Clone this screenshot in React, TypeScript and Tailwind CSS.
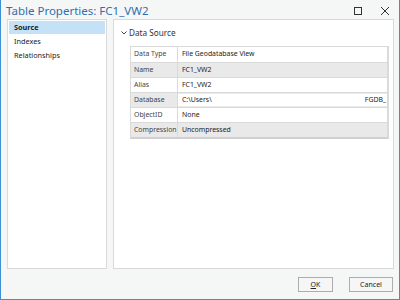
import React from "react";

const rows: { label: string; value: string; gray: boolean; input?: boolean }[] = [
  { label: "Data Type", value: "File Geodatabase View", gray: false },
  { label: "Name", value: "FC1_VW2", gray: true },
  { label: "Alias", value: "FC1_VW2", gray: false },
  { label: "Database", value: "C:\\Users\\", gray: true, input: true },
  { label: "ObjectID", value: "None", gray: false },
  { label: "Compression", value: "Uncompressed", gray: true },
];

export default function App() {
  return (
    <div
      className="w-[400px] h-[300px] bg-[#f5f6f6] border-l border-r border-b border-[#3d8fd6] flex flex-col text-[#222]"
      style={{ fontFamily: '"Noto Sans", "Open Sans", sans-serif' }}
    >
      {/* title bar */}
      <div className="h-[19px] flex items-center pl-[5px] pr-[6px] shrink-0">
        <div className="text-[11.5px] text-[#2f6fb0] leading-none flex-1 pt-[3px]">Table Properties: FC1_VW2</div>
        <svg width="10" height="10" viewBox="0 0 10 10" className="mr-[17px] mt-[3px]">
          <rect x="1.5" y="1.5" width="7" height="7" fill="none" stroke="#333" strokeWidth="1" />
        </svg>
        <svg width="10" height="10" viewBox="0 0 10 10" className="mr-[3px] mt-[3px]">
          <path d="M1 1 L9 9 M9 1 L1 9" stroke="#333" strokeWidth="1" />
        </svg>
      </div>
      {/* body */}
      <div className="flex gap-[6px] pl-[6px] pr-[5px] h-[250px] shrink-0">
        <div className="w-[100px] bg-white border border-[#d9d9d9] pt-px px-px">
          <div className="h-[13px] bg-[#c4e1f8] flex items-center pl-[5px] text-[7.3px] font-bold leading-none">Source</div>
          <div className="h-[15px] flex items-center pl-[5px] text-[7.3px] leading-none">Indexes</div>
          <div className="h-[13px] flex items-center pl-[5px] text-[7.3px] leading-none">Relationships</div>
        </div>
        <div className="flex-1 bg-white border border-[#d9d9d9] pl-[6px] pr-[4px]">
          <div className="flex items-center h-[25px] pt-[1px]">
            <svg width="6" height="6" viewBox="0 0 6 6" className="ml-[1px] mr-[2px]">
              <path d="M0.5 1.5 L3 4 L5.5 1.5" fill="none" stroke="#444" strokeWidth="1" />
            </svg>
            <span className="text-[8.2px] text-[#333]">Data Source</span>
          </div>
          <div className="ml-[10px] mt-[1px] border border-[#dadada] border-b-2 border-r-2 border-b-[#d0d0d0]">
            {rows.map((r, i) => (
              <div
                key={r.label}
                className={`flex h-[15px] text-[6.9px] ${r.gray ? "bg-[#e9e9e9]" : "bg-white"} ${i > 0 ? "border-t border-[#dadada]" : ""}`}
              >
                <div className="w-[47px] border-r border-[#dadada] flex items-center pl-[3px] text-[#444] whitespace-nowrap">{r.label}</div>
                {r.input ? (
                  <div className="flex-1 flex items-center justify-between bg-white pl-[4px] pr-[1px] my-[1px]">
                    <span>{r.value}</span>
                    <span>FGDB_</span>
                  </div>
                ) : (
                  <div className="flex-1 flex items-center pl-[4px] text-[#222]">{r.value}</div>
                )}
              </div>
            ))}
          </div>
        </div>
      </div>
      {/* footer */}
      <div className="flex-1 flex items-start justify-end pt-[8px] pr-[6px] gap-[16px]">
        <button className="w-[35px] h-[15px] border border-[#adadad] bg-[#f6f6f6] text-[7px] flex items-center justify-center leading-none">
          <span className="underline">O</span>K
        </button>
        <button className="w-[44px] h-[15px] border border-[#adadad] bg-[#f6f6f6] text-[7px] flex items-center justify-center leading-none">
          Cancel
        </button>
      </div>
    </div>
  );
}
